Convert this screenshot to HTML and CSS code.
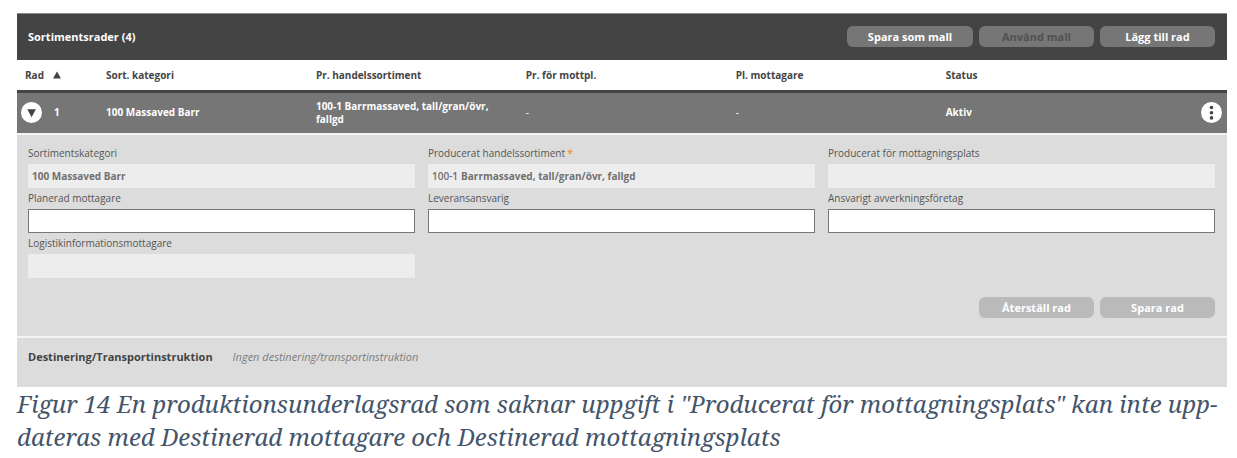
FILE: index.html
```html
<!DOCTYPE html>
<html lang="sv">
<head>
<meta charset="utf-8">
<title>Sortimentsrader</title>
<link rel="stylesheet" href="styles.css">
</head>
<body>
<figure class="figure">
  <section class="panel">
    <header class="toolbar">
      <h1 class="title">Sortimentsrader (4)</h1>
      <div class="actions">
        <button class="btn btn-wide" type="button">Spara som mall</button>
        <button class="btn btn-off" type="button" disabled>Använd mall</button>
        <button class="btn" type="button">Lägg till rad</button>
      </div>
    </header>
    <table class="rows">
      <colgroup><col class="col-row"><col class="col-data"><col class="col-data"><col class="col-data"><col class="col-data"><col class="col-data"><col></colgroup>
      <thead>
        <tr>
          <th scope="col" aria-sort="ascending">Rad <svg class="sort" viewBox="0 0 8 8" aria-hidden="true"><path d="M4 0.5 8 7.5H0z"/></svg></th>
          <th scope="col">Sort. kategori</th>
          <th scope="col">Pr. handelssortiment</th>
          <th scope="col">Pr. för mottpl.</th>
          <th scope="col">Pl. mottagare</th>
          <th scope="col">Status</th>
          <td></td>
        </tr>
      </thead>
      <tbody>
        <tr>
          <td class="cell-toggle"><div class="toggle">
            <button class="round" type="button" aria-label="Dölj detaljer" aria-expanded="true"><svg viewBox="0 0 21 21"><path d="M6.3 7.2h8.6l-4.3 8z"/></svg></button>
            <span>1</span></div>
          </td>
          <td>100 Massaved Barr</td>
          <td>100-1 Barrmassaved, tall/gran/övr, fallgd</td>
          <td class="thin">-</td>
          <td class="thin">-</td>
          <td>Aktiv</td>
          <td class="cell-menu"><button class="round" type="button" aria-label="Fler val"><svg viewBox="0 0 21 21"><circle cx="10.5" cy="5.5" r="1.8"/><circle cx="10.5" cy="10.7" r="1.8"/><circle cx="10.5" cy="15.9" r="1.8"/></svg></button></td>
        </tr>
      </tbody>
    </table>
    <form class="details">
      <div class="fields">
        <div class="field">
          <label for="kategori">Sortimentskategori</label>
          <div class="box locked"><input id="kategori" type="text" value="100 Massaved Barr" readonly></div>
        </div>
        <div class="field">
          <label for="sortiment">Producerat handelssortiment <span class="required">*</span></label>
          <div class="box locked"><span class="code">100-1</span><input id="sortiment" type="text" value="Barrmassaved, tall/gran/övr, fallgd" readonly></div>
        </div>
        <div class="field">
          <label for="plats">Producerat för mottagningsplats</label>
          <div class="box locked"><input id="plats" type="text" readonly></div>
        </div>
        <div class="field">
          <label for="mottagare">Planerad mottagare</label>
          <div class="box"><input id="mottagare" type="text"></div>
        </div>
        <div class="field">
          <label for="leverans">Leveransansvarig</label>
          <div class="box"><input id="leverans" type="text"></div>
        </div>
        <div class="field">
          <label for="foretag">Ansvarigt avverkningsföretag</label>
          <div class="box"><input id="foretag" type="text"></div>
        </div>
        <div class="field">
          <label for="logistik">Logistikinformationsmottagare</label>
          <div class="box locked"><input id="logistik" type="text" readonly></div>
        </div>
      </div>
      <div class="actions">
        <button class="btn btn-pale" type="reset" disabled>Återställ rad</button>
        <button class="btn btn-pale" type="submit" disabled>Spara rad</button>
      </div>
    </form>
    <div class="destination">
      <h2 class="subtitle">Destinering/Transportinstruktion</h2>
      <p class="empty">Ingen destinering/transportinstruktion</p>
    </div>
  </section>
  <figcaption class="caption">Figur 14 En produktionsunderlagsrad som saknar uppgift i "Producerat för mottagningsplats" kan inte upp-<br>dateras med Destinerad mottagare och Destinerad mottagningsplats</figcaption>
</figure>
</body>
</html>
```
FILE: styles.css
```css
* {
  box-sizing: border-box;
}

body {
  margin: 0;
  background: #fff;
  color: #444;
  font-family: "Open Sans", sans-serif;
  font-size: 10px;
}

button,
input {
  font: inherit;
  color: inherit;
}

.figure {
  margin: 0;
  padding: 13px 10px 0 17px;
}

.toolbar {
  display: flex;
  align-items: center;
  justify-content: space-between;
  padding: 12px 12px 13px 11px;
  border-top: 1px solid #8a8a8a;
  background: #444;
  color: #fff;
}

.title {
  margin: 0;
  font-size: 11px;
  line-height: 20px;
}

.actions {
  display: flex;
  justify-content: flex-end;
  gap: 6px;
}

.btn {
  min-width: 115px;
  height: 21px;
  padding: 0 12px;
  border: 0;
  border-radius: 6px;
  background: #767676;
  color: #fff;
  font-size: 11px;
  font-weight: 700;
  line-height: 20px;
}

.btn-wide {
  min-width: 126px;
}

.btn-off {
  color: #505050;
}

.btn-pale {
  background: #bababa;
}

.rows {
  width: 100%;
  table-layout: fixed;
  border-collapse: collapse;
}

.col-row {
  width: 81px;
}

.col-data {
  width: 17.35%;
}

.rows th,
.rows td {
  padding: 0 8px;
  text-align: left;
  vertical-align: middle;
}

.rows th {
  height: 31px;
  color: #444;
  font-weight: 700;
}

.rows thead tr {
  border-bottom: 3px solid #444;
}

.sort {
  width: 8px;
  height: 8px;
  margin-left: 6px;
  fill: #444;
}

.rows tbody tr {
  height: 42px;
  background: #767676;
  color: #fff;
  font-weight: 700;
  line-height: 13px;
}

.rows .thin {
  font-weight: 400;
}

.rows .cell-toggle {
  padding: 0 4px;
}

.toggle {
  display: flex;
  align-items: center;
  gap: 12px;
}

.rows .cell-menu {
  padding: 0 5px;
  text-align: right;
}

.round {
  width: 21px;
  height: 21px;
  padding: 0;
  border: 0;
  border-radius: 50%;
  background: #fff;
  vertical-align: middle;
}

.round svg {
  display: block;
  width: 21px;
  height: 21px;
  fill: #444;
}

.details {
  padding: 8px 12px 18px 11px;
  border-top: 2px solid #f4f4f4;
  background: #dcdcdc;
}

.fields {
  display: grid;
  grid-template-columns: repeat(3, 1fr);
  column-gap: 13px;
  margin-bottom: 19px;
}

.field label {
  display: block;
  color: #555;
  line-height: 21px;
}

.required {
  color: #f09a3c;
  font-weight: 700;
}

.box {
  display: flex;
  align-items: center;
  height: 24px;
  padding: 0 4px;
  border: 1px solid #777;
  background: #fff;
}

.box input {
  flex: 1;
  min-width: 0;
  padding: 0;
  border: 0;
  outline: 0;
  background: transparent;
  font-weight: 700;
}

.locked {
  padding: 0 3px;
  border-color: #ededed;
  background: #ededed;
  color: #707070;
}

.code {
  margin-right: 3px;
  font-weight: 600;
}

.destination {
  display: flex;
  gap: 20px;
  padding: 8px 11px 19px;
  border-top: 2px solid #f4f4f4;
  background: #dcdcdc;
  line-height: 22px;
}

.subtitle {
  margin: 0;
  font-size: 11px;
}

.empty {
  margin: 0;
  color: #7c7c7c;
  font-size: 11px;
  font-style: italic;
}

.caption {
  color: #44546a;
  font-family: "Noto Serif", "Droid Serif", "Liberation Serif", serif;
  font-size: 24px;
  font-style: italic;
  line-height: 33px;
}
```
